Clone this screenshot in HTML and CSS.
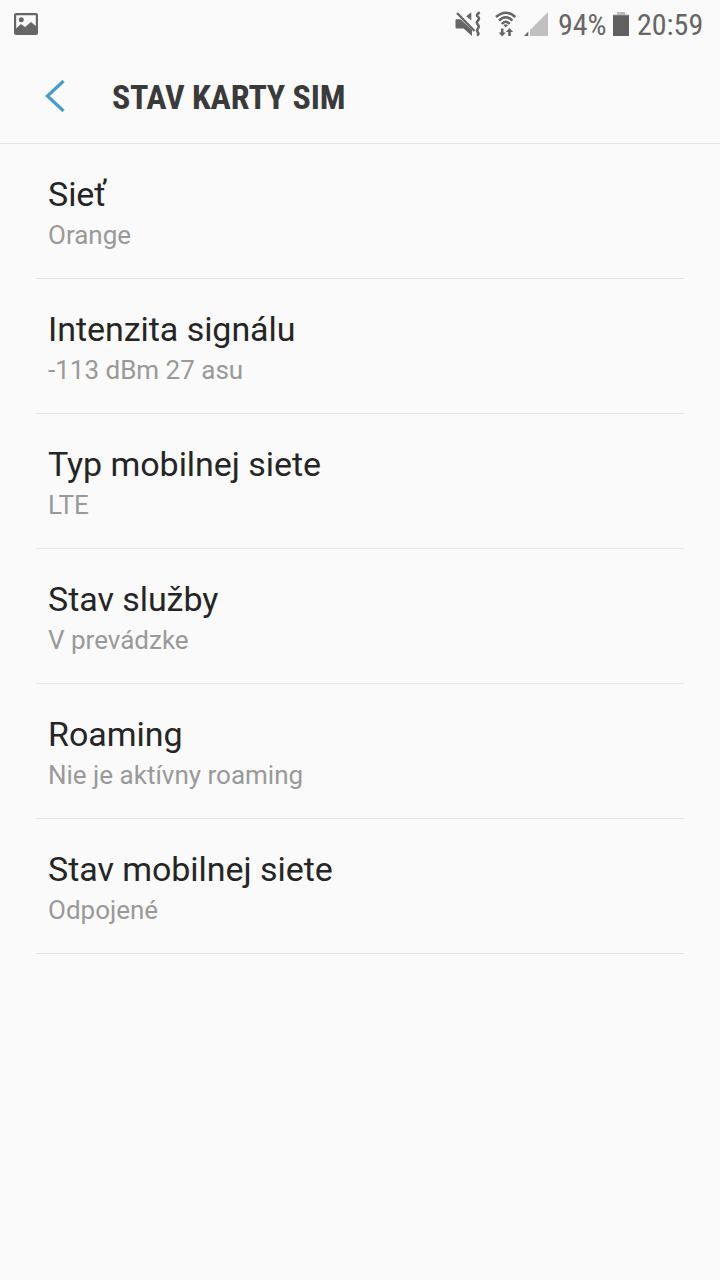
FILE: index.html
```html
<!DOCTYPE html>
<html lang="sk">
<head>
    <meta charset="UTF-8">
    <meta name="viewport" content="width=device-width, initial-scale=1.0">
    <title>Stav karty SIM</title>
    <link rel="stylesheet" href="styles.css">
</head>
<body>
    <div class="status-bar">
        <svg class="icon-picture" width="24" height="22" viewBox="0 0 24 22">
            <path fill="#666" fill-rule="evenodd" d="M2 0h20a2 2 0 0 1 2 2v18a2 2 0 0 1-2 2H2a2 2 0 0 1-2-2V2a2 2 0 0 1 2-2zM2.200 2.200V15.500L7 11L11 14L17 9L21.800 13V2.200z"/>
            <circle cx="7.300" cy="6.800" r="2.500" fill="#666"/>
        </svg>
        <div class="status-right">
            <svg class="icon-mute" width="27" height="26" viewBox="0 0 27 26">
                <path fill="#666" d="M2.500 8.200h4L18 19v6L9.500 17.500h-7a1 1 0 0 1-1-1V9.200a1 1 0 0 1 1-1zM12.200 5.200L17.300 1.200V9.500z"/>
                <path fill="none" stroke="#666" stroke-width="2.400" d="M3 2L20.500 20"/>
                <path fill="none" stroke="#666" stroke-width="2.500" stroke-linejoin="round" d="M25.800 1.500Q21.500 3.500 23.800 5.500T24 9.500T23.800 13.500T24 17.500T23.800 21.500Q25.500 23 23 24.500"/>
            </svg>
            <svg class="icon-wifi" width="22" height="26" viewBox="0 0 22 26">
                <g fill="none" stroke="#666" stroke-width="2.500">
                    <path d="M1 6Q10.700 -2.600 20.400 6"/>
                    <path d="M4 9.700Q10.700 2.800 17.400 9.700"/>
                    <path d="M6.800 13Q10.700 8.500 14.600 13"/>
                </g>
                <path fill="#666" d="M8.500 14.200Q10.700 12.200 12.900 14.200L10.700 16.600z"/>
                <path fill="#666" d="M5.900 17.500h2.600v4h2.300L7.200 25.500L3.600 21.500h2.300zM13.200 25v-4h-2.300L14.500 17l3.600 4h-2.300v4z"/>
            </svg>
            <svg class="icon-signal" width="24" height="24" viewBox="0 0 24 24">
                <path fill="#c0c0c0" d="M24 0v24H6V18z"/>
                <path fill="#666" d="M4.300 19.500V24H0z"/>
            </svg>
            <span class="battery-level">94%</span>
            <svg class="icon-battery" width="16" height="24" viewBox="0 0 16 24">
                <path fill="#b8b8b8" d="M4 0h8v2.500h4v1H0v-1h4z"/>
                <path fill="#606060" d="M0 3.200h16V24H0z"/>
            </svg>
            <span class="clock">20:59</span>
        </div>
    </div>

    <header class="header">
        <svg class="icon-back" width="20" height="32" viewBox="0 0 20 32">
            <path fill="none" stroke="#439fc2" stroke-width="3.200" d="M18.500 1L2.400 16L18.500 31"/>
        </svg>
        <h1>STAV KARTY SIM</h1>
    </header>

    <main class="list">
        <div class="item">
            <div class="item-title">Sieť</div>
            <div class="item-value">Orange</div>
        </div>
        <div class="item">
            <div class="item-title">Intenzita signálu</div>
            <div class="item-value">-113 dBm 27 asu</div>
        </div>
        <div class="item">
            <div class="item-title">Typ mobilnej siete</div>
            <div class="item-value">LTE</div>
        </div>
        <div class="item">
            <div class="item-title">Stav služby</div>
            <div class="item-value">V prevádzke</div>
        </div>
        <div class="item">
            <div class="item-title">Roaming</div>
            <div class="item-value">Nie je aktívny roaming</div>
        </div>
        <div class="item">
            <div class="item-title">Stav mobilnej siete</div>
            <div class="item-value">Odpojené</div>
        </div>
    </main>
</body>
</html>
```
FILE: styles.css
```css
* {
    box-sizing: border-box;
    margin: 0;
    padding: 0;
}

body {
    background-color: #fafafa;
    color: #252525;
    font-family: Roboto, sans-serif;
    min-height: 100vh;
}

svg {
    display: block;
    flex-shrink: 0;
}

.status-bar {
    display: flex;
    justify-content: space-between;
    align-items: center;
    height: 48px;
    padding: 0 16px 0 14px;
}

.status-right {
    display: flex;
    align-items: center;
    color: #666;
    font-family: "Roboto Condensed", Roboto, sans-serif;
    font-stretch: 75%;
    font-size: 30px;
    line-height: 46px;
}

.icon-wifi {
    margin-left: 14px;
}

.icon-signal {
    margin-left: 7px;
}

.battery-level {
    width: 49px;
    margin-left: 10px;
    padding-top: 2px;
}

.icon-battery {
    margin-left: 6px;
}

.clock {
    width: 67px;
    margin-left: 8px;
    padding-top: 2px;
}

.header {
    display: flex;
    align-items: center;
    height: 96px;
    padding-left: 45px;
    border-bottom: 1px solid #e4e4e4;
}

h1 {
    margin-left: 47px;
    padding-top: 2px;
    color: #3a3a3a;
    font-family: "Roboto Condensed", Roboto, sans-serif;
    font-stretch: 75%;
    font-size: 34px;
    font-weight: 700;
    line-height: 40px;
    letter-spacing: -0.25px;
}

.list {
    padding: 0 36px;
}

.item {
    height: 135px;
    padding: 29px 12px 0;
    border-bottom: 1px solid #e4e4e4;
}

.item-title {
    font-size: 34px;
    line-height: 42px;
    letter-spacing: -0.05px;
}

.item-value {
    margin-top: 1px;
    color: #999;
    font-size: 26px;
    line-height: 38px;
}
```
